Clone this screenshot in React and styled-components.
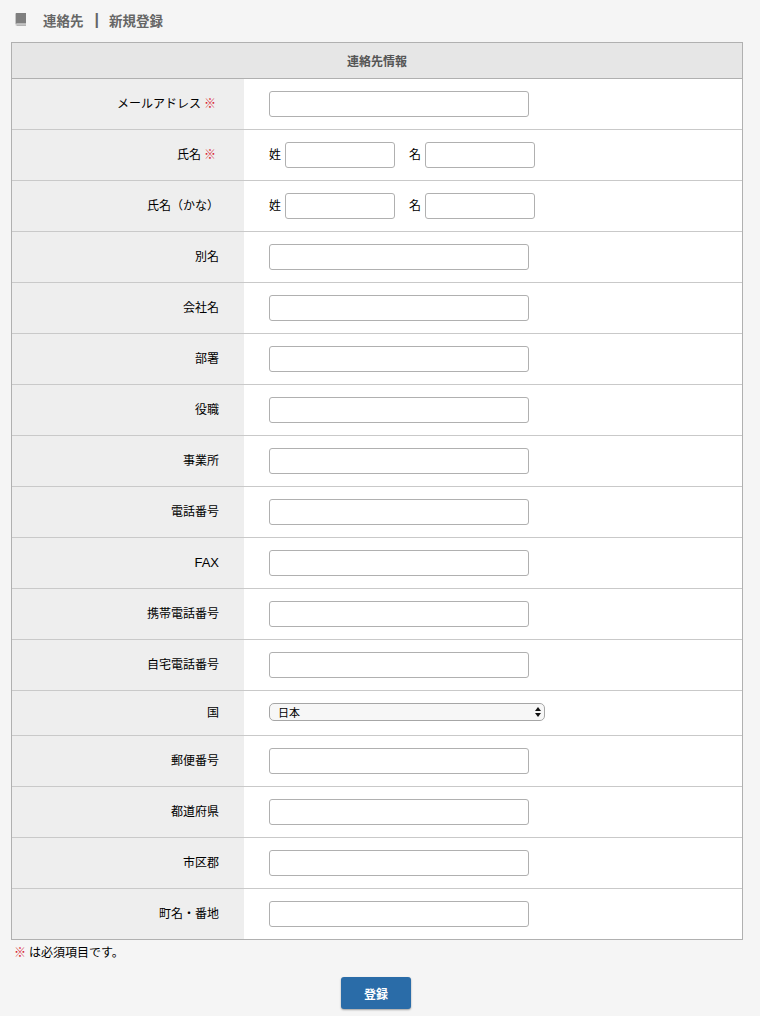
import React from "react";
import styled, { createGlobalStyle } from "styled-components";

const Global = createGlobalStyle`
  html, body { margin: 0; padding: 0; background: #f5f5f5; }
  body { font-family: "Liberation Sans", "Noto Sans CJK JP", sans-serif; font-size: 12px; color: #000; }
`;
const Page = styled.div`
  width: 760px; height: 1016px; overflow: hidden; padding: 0 17px 0 11px; box-sizing: border-box;
`;
const Title = styled.h1`
  margin: 0; height: 42px; display: flex; align-items: center; padding: 0 0 2px 4px; box-sizing: border-box;
  font-size: 13.5px; font-weight: 700; color: #666;
`;
const BookIcon = styled.svg` width: 12px; height: 14px; margin-right: 16px; display: block; `;
const Sep = styled.span` margin: 0 10px 0 11px; font-size: 16px; line-height: 16px; `;
const Form = styled.form`
  display: block; margin: 0;
`;
const Panel = styled.div`
  border: 1px solid #b0b0b0; width: 732px; box-sizing: border-box; background: #fff;
`;
const PanelHead = styled.div`
  height: 36px; background: #e6e6e6; border-bottom: 1px solid #b0b0b0; box-sizing: border-box;
  display: flex; align-items: center; justify-content: center;
  font-size: 12px; font-weight: 700; color: #555;
`;
const Row = styled.div`
  display: grid; grid-template-columns: 232px 1fr; height: ${p => p.$h}px; box-sizing: border-box;
  border-bottom: 1px solid #c9c9c9;
  &:last-child { border-bottom: 0; height: ${p => p.$h - 1}px; }
`;
const Label = styled.div`
  background: #eee; display: flex; align-items: center; justify-content: flex-end; padding-right: 25px;
  padding-bottom: ${p => (p.$latin ? 2 : 3)}px; box-sizing: border-box; font-size: ${p => (p.$latin ? 13 : 12)}px;
`;
const Req = styled.span` color: #d81e34; margin: 0 3px 0 3px; `;
const Cell = styled.div`
  display: flex; align-items: center; padding-left: 25px;
`;
const Input = styled.input`
  width: ${p => p.$w}px; height: 26px; box-sizing: border-box; border: 1px solid #b0b0b0; border-radius: 3px;
  background: #fff; margin: 0; padding: 0 4px; outline: 0;
`;
const NamePart = styled.span`
  display: inline-flex; align-items: center; gap: 4px; margin-right: 14px;
`;
const NameCaption = styled.span` position: relative; top: -2px; `;
const SelectBox = styled.div`
  width: 276px; height: 18px; box-sizing: border-box; border: 1px solid #a6a6a6; border-radius: 5px;
  background: #f7f7f7; display: flex; align-items: center; justify-content: space-between;
  padding: 0 3px 0 8px; font-size: 11px; margin-bottom: 2px;
`;
const Arrows = styled.svg` width: 6px; height: 10px; display: block; `;
const Note = styled.p`
  margin: 5px 0 0 3px; font-size: 12px; line-height: 17px;
`;
const NoteMark = styled.span` color: #d81e34; margin-right: 3px; `;
const Actions = styled.div`
  display: flex; justify-content: center; margin-top: 15px; width: 730px;
`;
const Button = styled.button`
  width: 70px; height: 32px; border: 0; border-radius: 3px; background: #2a6ca8; color: #fff;
  font: 700 12px "Liberation Sans", "Noto Sans CJK JP", sans-serif; box-shadow: 0 1px 2px rgba(0,0,0,.35); padding: 0;
`;

const before = ["別名", "会社名", "部署", "役職", "事業所", "電話番号", "FAX", "携帯電話番号", "自宅電話番号"];
const after = ["郵便番号", "都道府県", "市区郡", "町名・番地"];

const TextRow = ({ label, req }) => (
  <Row $h={51}>
    <Label $latin={/^[A-Z]+$/.test(label)}>{label}{req && <Req>※</Req>}</Label>
    <Cell><Input $w={260} /></Cell>
  </Row>
);
const NameRow = ({ label, req }) => (
  <Row $h={51}>
    <Label>{label}{req && <Req>※</Req>}</Label>
    <Cell>
      <NamePart><NameCaption>姓</NameCaption><Input $w={110} /></NamePart>
      <NamePart><NameCaption>名</NameCaption><Input $w={110} /></NamePart>
    </Cell>
  </Row>
);

export default function App() {
  return (
    <Page>
      <Global />
      <Title>
        <BookIcon viewBox="0 0 12 14">
          <path d="M1.6 0H11v10.4H2.2C1.3 10.4 .6 11 .6 11.8V1C.6 .4 1 0 1.6 0z" fill="#7f7f7f" />
          <path d="M2.2 11.2H11v1.8H2.2c-1 0-1.6-.4-1.6-.9s.6-.9 1.6-.9z" fill="#b4b4b4" />
        </BookIcon>
        連絡先<Sep>|</Sep>新規登録
      </Title>
      <Form onSubmit={e => e.preventDefault()}>
        <Panel>
          <PanelHead>連絡先情報</PanelHead>
          <TextRow label="メールアドレス" req />
          <NameRow label="氏名" req />
          <NameRow label="氏名（かな）" />
          {before.map(label => <TextRow key={label} label={label} />)}
          <Row $h={45}>
            <Label>国</Label>
            <Cell>
              <SelectBox>
                <span>日本</span>
                <Arrows viewBox="0 0 6 10"><path d="M3 0L6 4H0zM3 10L0 6h6z" fill="#111" /></Arrows>
              </SelectBox>
            </Cell>
          </Row>
          {after.map(label => <TextRow key={label} label={label} />)}
        </Panel>
        <Note><NoteMark>※</NoteMark>は必須項目です。</Note>
        <Actions><Button type="submit">登録</Button></Actions>
      </Form>
    </Page>
  );
}
